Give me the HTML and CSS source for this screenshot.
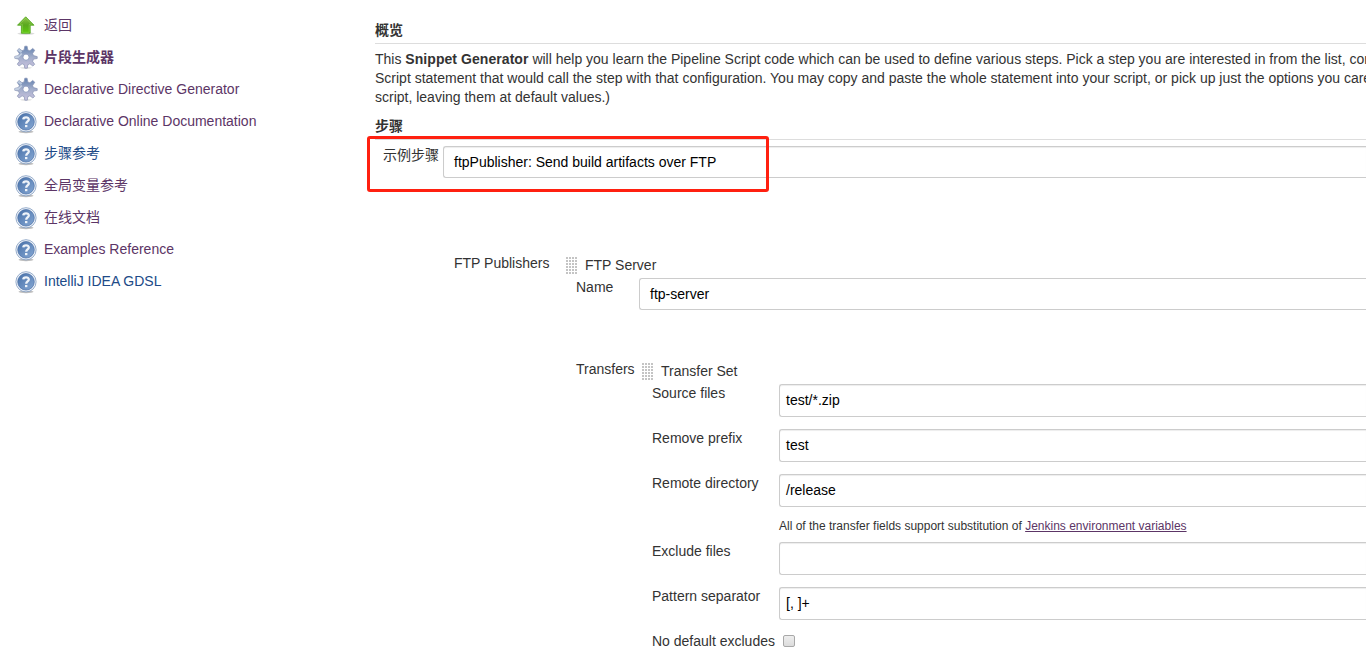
FILE: index.html
```html
<!DOCTYPE html>
<html lang="zh-CN">
<head>
<meta charset="utf-8">
<title>Pipeline Syntax</title>
<link rel="stylesheet" href="styles.css">
</head>
<body>
<svg class="defs" width="0" height="0" aria-hidden="true">
  <defs>
    <linearGradient id="gUp" x1="0" y1="0" x2="0" y2="1"><stop offset="0" stop-color="#8fc44a"/><stop offset=".5" stop-color="#5aa81e"/><stop offset="1" stop-color="#5ccb0c"/></linearGradient>
    <linearGradient id="gGear" x1="0" y1="0" x2="0" y2="1"><stop offset="0" stop-color="#5f7fae"/><stop offset=".5" stop-color="#a3aecb"/><stop offset="1" stop-color="#c9c2de"/></linearGradient>
    <linearGradient id="gHelp" x1="0" y1="0" x2="1" y2="1"><stop offset="0" stop-color="#4770a8"/><stop offset="1" stop-color="#86a8d4"/></linearGradient>
    <symbol id="up" viewBox="0 0 24 24">
      <ellipse cx="12" cy="20.6" rx="8.6" ry="1.3" fill="#000" opacity=".14"/>
      <path d="M11.7 3.8 20 12.2H16.2V20.3H7.4V12.2H3.5Z" fill="url(#gUp)" stroke="#4fa31c" stroke-width=".8" stroke-linejoin="round"/>
      <path d="M11.7 5.2 17.8 11.3H15.2V19.3H8.4V11.3H5.7Z" fill="none" stroke="#a3dd66" stroke-width=".7" opacity=".6"/>
    </symbol>
    <symbol id="gear" viewBox="0 0 24 24">
      <ellipse cx="12" cy="22.8" rx="6" ry=".9" fill="#000" opacity=".12"/>
      <path d="M10.8 1.2H13.1L13.8 5 15.9 5.8 18.7 3.4 20.8 5.3 18.6 8.4 19.4 10.6 23.2 11.6V13.5L19.5 14.1 18.6 16.3 20.7 19.3 18.9 21 15.9 18.8 13.8 19.7 13.3 23.2H10.8L10.2 19.7 8.1 18.8 5.1 21 3.3 19.1 5.4 16.2 4.5 14.1.8 13.3V11.4L4.5 10.5 5.3 8.4 3.2 5.4 5.1 3.5 8 5.7 10.1 4.9Z" fill="url(#gGear)" stroke="#8792b3" stroke-width=".7" stroke-linejoin="round"/>
      <path d="M3.4 5.4 5.1 3.7 8.2 6.2 5.8 9.5 4.5 10.6.9 11.5V13.2L4.4 13 8.6 9Z" fill="#cfdbe9" opacity=".75"/>
      <circle cx="12" cy="12.2" r="3.1" fill="#fff" stroke="#8290b8" stroke-width=".8"/>
    </symbol>
    <symbol id="help" viewBox="0 0 24 24">
      <ellipse cx="12" cy="21.8" rx="7.5" ry="1.4" fill="#000" opacity=".25"/>
      <circle cx="12" cy="11.8" r="10.1" fill="#f2f5fa" stroke="#7c98be" stroke-width=".8"/>
      <circle cx="12" cy="11.8" r="8.3" fill="url(#gHelp)" stroke="#476fa6" stroke-width=".7"/>
      <path d="M9.3 9.4C9.4 6.7 14.9 6.6 14.8 9.5 14.7 11.4 12.2 11.5 12.2 13.7" fill="none" stroke="#eef3f9" stroke-width="2.3"/>
      <rect x="11" y="15" width="2.4" height="2.2" fill="#eef3f9"/>
    </symbol>
  </defs>
</svg>
<div class="page">
  <nav class="side">
    <a class="task"><svg class="ico"><use href="#up"/></svg><span>返回</span></a>
    <a class="task current"><svg class="ico"><use href="#gear"/></svg><span>片段生成器</span></a>
    <a class="task"><svg class="ico"><use href="#gear"/></svg><span>Declarative Directive Generator</span></a>
    <a class="task"><svg class="ico low"><use href="#help"/></svg><span>Declarative Online Documentation</span></a>
    <a class="task fresh"><svg class="ico low"><use href="#help"/></svg><span>步骤参考</span></a>
    <a class="task"><svg class="ico low"><use href="#help"/></svg><span>全局变量参考</span></a>
    <a class="task"><svg class="ico low"><use href="#help"/></svg><span>在线文档</span></a>
    <a class="task"><svg class="ico low"><use href="#help"/></svg><span>Examples Reference</span></a>
    <a class="task fresh"><svg class="ico low"><use href="#help"/></svg><span>IntelliJ IDEA GDSL</span></a>
  </nav>
  <main class="main">
    <h2 class="heading">概览</h2>
    <p class="intro">This <b>Snippet Generator</b> will help you learn the Pipeline Script code which can be used to define various steps. Pick a step you are interested in from the list, con<br>Script statement that would call the step with that configuration. You may copy and paste the whole statement into your script, or pick up just the options you care<br>script, leaving them at default values.)</p>
    <h2 class="heading">步骤</h2>
    <div class="step">
      <span class="step-label">示例步骤</span>
      <div class="box select">ftpPublisher: Send build artifacts over FTP</div>
      <div class="mark"></div>
    </div>
    <section class="publishers">
      <span class="group-label">FTP Publishers</span>
      <div class="server">
        <div class="drag-row"><i class="handle"></i><span>FTP Server</span></div>
        <div class="name-row"><span class="name-label">Name</span><div class="box select">ftp-server</div></div>
        <div class="transfers">
          <span class="transfers-label">Transfers</span>
          <div class="set">
            <div class="drag-row"><i class="handle"></i><span>Transfer Set</span></div>
            <div class="field"><span class="label">Source files</span><div class="box input">test/*.zip</div></div>
            <div class="field"><span class="label">Remove prefix</span><div class="box input">test</div></div>
            <div class="field"><span class="label">Remote directory</span><div class="box input">/release</div></div>
            <div class="hint">All of the transfer fields support substitution of <a class="link">Jenkins environment variables</a></div>
            <div class="field"><span class="label">Exclude files</span><div class="box input"></div></div>
            <div class="field"><span class="label">Pattern separator</span><div class="box input">[, ]+</div></div>
            <div class="field"><span class="label">No default excludes</span><i class="check"></i></div>
          </div>
        </div>
      </div>
    </section>
  </main>
</div>
</body>
</html>
```

FILE: styles.css
```css
* { box-sizing: border-box; }
html, body { margin: 0; height: 100%; overflow: hidden; background: #fff; }
body {
  font-family: "Liberation Sans", Arial, "Noto Sans CJK SC", sans-serif;
  font-size: 14px;
  line-height: 20px;
  color: #333;
  white-space: nowrap;
}
.defs { position: absolute; }
.page { display: flex; width: 1366px; height: 659px; overflow: hidden; }

.side { flex: 0 0 375px; padding: 9px 0 0 14px; }
.task { display: flex; align-items: center; gap: 6px; height: 32px; color: #5c3566; }
.task.fresh { color: #204a87; }
.task.current { font-weight: bold; }
.ico { width: 24px; height: 24px; flex: none; }
.ico.low { margin-top: 2px; }

.main { flex: 1; min-width: 0; padding-top: 20px; }
.heading {
  margin: 0;
  height: 24px;
  font-size: 14px;
  line-height: 20px;
  border-bottom: 1px solid #ddd;
}
.intro { margin: 6px 0 9px; line-height: 19px; }
.intro b { letter-spacing: .06px; }

.box {
  flex: 1;
  color: #000;
  background: #fff;
  border: 1px solid #ccc;
  border-right: 0;
  border-radius: 3px 0 0 3px;
}
.select { height: 32px; padding-left: 10px; line-height: 30px; }
.input { height: 33px; padding-left: 6px; line-height: 31px; box-shadow: inset 0 1px 1px rgba(0, 0, 0, .075); }

.step { position: relative; display: flex; padding: 6px 0 0 8px; }
.step-label { width: 60px; margin-top: -1px; }
.step .select { box-shadow: inset 0 1px 1px rgba(0, 0, 0, .075); }
.mark {
  position: absolute;
  left: -8px;
  top: -4px;
  width: 402px;
  height: 56px;
  border: 3px solid #ff2010;
  border-radius: 3px;
}

.publishers { display: flex; padding: 75px 0 0 79px; }
.group-label { width: 112px; }
.server { flex: 1; }
.drag-row { display: flex; align-items: flex-start; gap: 8px; height: 25px; padding-top: 2px; }
.handle {
  width: 11px;
  height: 17px;
  margin-top: 2px;
  background:
    linear-gradient(#a8a8a8, #a8a8a8) 1px 0 / 3px 3px,
    #fff;
  background:
    conic-gradient(from 0deg at 2px 2px, #fff 0 75%, #c4c4c4 0) 0 0 / 3px 3px;
}
.name-row { display: flex; padding-left: 10px; }
.name-label { width: 63px; margin-top: -1px; }
.transfers { display: flex; padding: 49px 0 0 10px; }
.transfers-label { width: 66px; }
.set { flex: 1; }
.field { display: flex; height: 45px; padding-left: 10px; }
.label { width: 127px; margin-top: -1px; }
.hint { height: 23px; padding: 1px 0 0 137px; font-size: 12px; line-height: 13px; }
.link { color: #5c3566; text-decoration: underline; }
.check {
  width: 12px;
  height: 12px;
  margin: 3px 0 0 4px;
  border: 1px solid #a8a8a8;
  border-radius: 2px;
  background: linear-gradient(#eee, #dcdcdc);
}
```
